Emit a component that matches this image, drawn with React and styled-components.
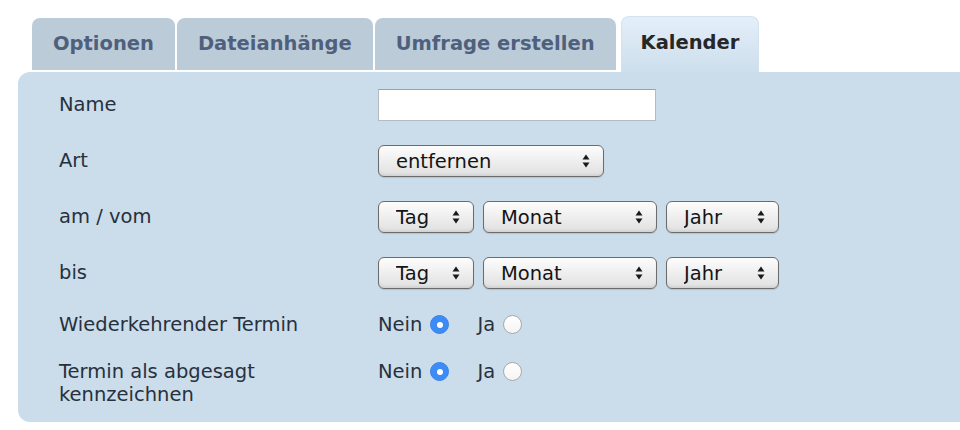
import React from 'react';
import styled, { createGlobalStyle } from 'styled-components';

const GlobalStyle = createGlobalStyle`
  html, body {
    margin: 0;
    padding: 0;
    background: #ffffff;
    overflow: hidden;
  }
  body {
    font-family: "DejaVu Sans", Verdana, sans-serif;
  }
`;

const Page = styled.div`
  width: 960px;
  height: 430px;
  padding: 0 0 0 18px;
  box-sizing: border-box;
  overflow: hidden;
`;

const TabBar = styled.div`
  display: flex;
  align-items: flex-end;
  gap: 2px;
  padding: 16px 0 0 14px;
`;

const Tab = styled.div`
  box-sizing: border-box;
  height: ${({ $active }) => ($active ? '56px' : '52px')};
  margin-bottom: ${({ $active }) => ($active ? '0' : '2px')};
  padding: 0 ${({ $active }) => ($active ? '19px' : '21px')};
  display: flex;
  align-items: center;
  padding-bottom: ${({ $active }) => ($active ? '5px' : '1px')};
  border-radius: 8px 8px 0 0;
  font-size: 19.5px;
  font-weight: bold;
  color: ${({ $active }) => ($active ? '#272727' : '#4f607d')};
  background: ${({ $active }) =>
    $active ? 'linear-gradient(#e4effa, #cddeec)' : '#bccbd8'};
  border: ${({ $active }) => ($active ? '1px solid #d3e2ef' : 'none')};
  border-bottom: none;
  margin-left: ${({ $active }) => ($active ? '3px' : '0')};
`;

const Panel = styled.div`
  width: 980px;
  box-sizing: border-box;
  background: #cbdcea;
  border-radius: 12px;
  padding: 17px 0 16px 41px;
  display: grid;
  grid-template-columns: 319px 1fr;
  row-gap: 24px;
  align-items: start;
`;

const Label = styled.div`
  font-size: 19.5px;
  line-height: 23px;
  color: #27313d;
  padding-top: ${({ $offset }) => $offset || 0}px;
  max-width: 250px;
`;

const Controls = styled.div`
  display: flex;
  align-items: center;
  gap: 9px;
`;

const TextInput = styled.input`
  box-sizing: border-box;
  width: 278px;
  height: 32px;
  margin: 0;
  border: 1px solid #b3bcc5;
  border-top-color: #94a4b3;
  background: #ffffff;
  font: inherit;
`;

const SelectWrap = styled.div`
  position: relative;
  display: inline-flex;
`;

const Select = styled.select`
  appearance: none;
  -webkit-appearance: none;
  box-sizing: border-box;
  width: ${({ $width }) => $width}px;
  height: 32px;
  margin: 0;
  padding: 0 30px 0 17px;
  border: 1px solid #6c6c6c;
  border-radius: 6px;
  background: linear-gradient(#fdfdfd, #ededed 55%, #e0e0e0);
  box-shadow: inset 0 -2px 2px rgba(0, 0, 0, 0.06), 0 1px 1px rgba(0, 0, 0, 0.12);
  font-family: "DejaVu Sans", Verdana, sans-serif;
  font-size: 19.5px;
  color: #141414;
`;

const Arrows = styled.svg`
  position: absolute;
  right: 14px;
  top: 9px;
  pointer-events: none;
`;

const RadioGroup = styled.div`
  display: flex;
  align-items: center;
  height: 23px;
  gap: 28px;
`;

const RadioLabel = styled.label`
  display: flex;
  align-items: center;
  gap: 8px;
  font-size: 19.5px;
  color: #27313d;
`;

const Radio = styled.span`
  box-sizing: border-box;
  width: 19px;
  height: 19px;
  border-radius: 50%;
  display: inline-flex;
  align-items: center;
  justify-content: center;
  background: ${({ $checked }) =>
    $checked ? '#3c8bf6' : 'linear-gradient(#ffffff, #f4f4f4)'};
  border: 1px solid ${({ $checked }) => ($checked ? '#3a82e8' : '#a9a9a9')};

  &::after {
    content: '';
    display: ${({ $checked }) => ($checked ? 'block' : 'none')};
    width: 6px;
    height: 6px;
    border-radius: 50%;
    background: #ffffff;
  }
`;

const ArrowIcon = () => (
  <Arrows width="8" height="14" viewBox="0 0 8 14">
    <path d="M4 0.5 L7.5 5.5 L0.5 5.5 Z" fill="#1a1a1a" />
    <path d="M4 13.5 L7.5 8.5 L0.5 8.5 Z" fill="#1a1a1a" />
  </Arrows>
);

const Dropdown = ({ width, value }) => (
  <SelectWrap>
    <Select $width={width} defaultValue={value}>
      <option>{value}</option>
    </Select>
    <ArrowIcon />
  </SelectWrap>
);

const DateSelects = () => (
  <Controls>
    <Dropdown width={96} value="Tag" />
    <Dropdown width={174} value="Monat" />
    <Dropdown width={113} value="Jahr" />
  </Controls>
);

const YesNo = () => (
  <RadioGroup>
    <RadioLabel>
      Nein <Radio $checked />
    </RadioLabel>
    <RadioLabel>
      Ja <Radio />
    </RadioLabel>
  </RadioGroup>
);

const tabs = ['Optionen', 'Dateianhänge', 'Umfrage erstellen', 'Kalender'];

const App = () => {
  return (
    <Page>
      <GlobalStyle />
      <TabBar>
        {tabs.map((t) => (
          <Tab key={t} $active={t === 'Kalender'}>
            {t}
          </Tab>
        ))}
      </TabBar>
      <Panel>
        <Label $offset={4}>Name</Label>
        <Controls>
          <TextInput type="text" />
        </Controls>

        <Label $offset={4}>Art</Label>
        <Controls>
          <Dropdown width={226} value="entfernen" />
        </Controls>

        <Label $offset={4}>am / vom</Label>
        <DateSelects />

        <Label $offset={4}>bis</Label>
        <DateSelects />

        <Label>Wiederkehrender Termin</Label>
        <YesNo />

        <Label>Termin als abgesagt kennzeichnen</Label>
        <YesNo />
      </Panel>
    </Page>
  );
};

export default App;
